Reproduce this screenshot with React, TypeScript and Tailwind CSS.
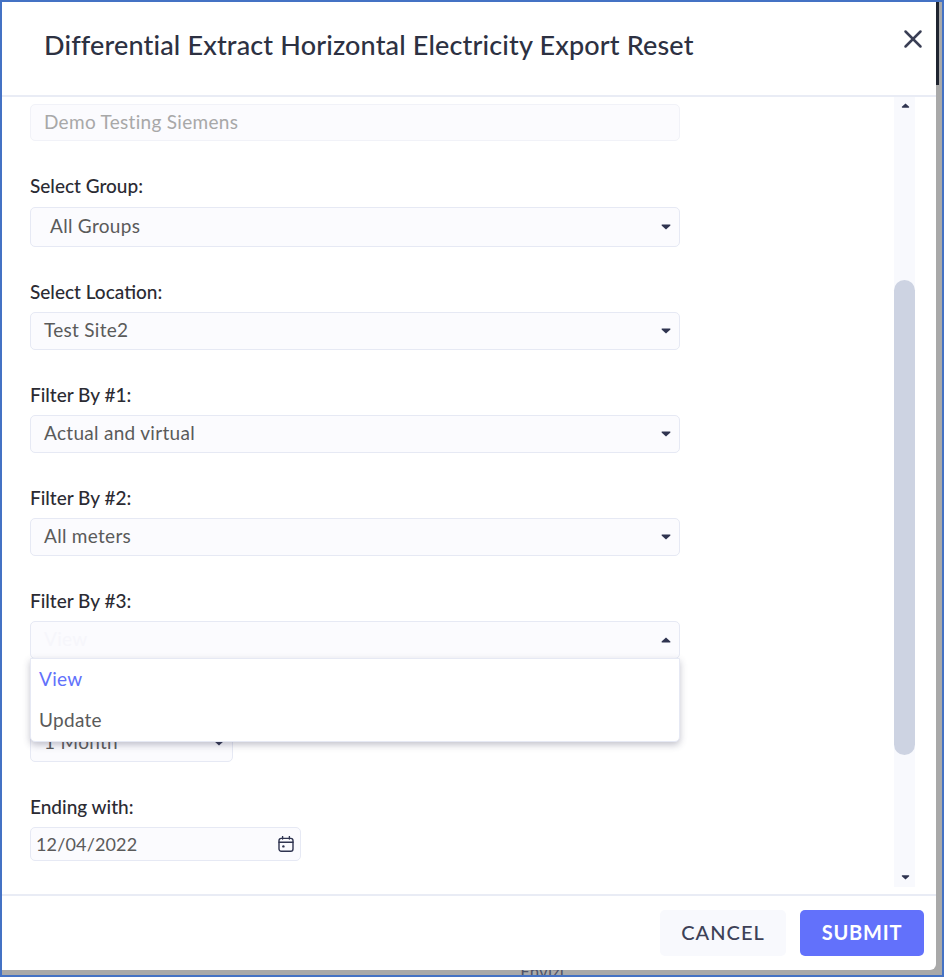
import { X } from "lucide-react"

function Caret({ up = false, className = "" }: { up?: boolean; className?: string }) {
  return (
    <svg width="10" height="6" viewBox="0 0 10 6" className={className}>
      {up ? (
        <path d="M5 0.6 L9.4 4.6 Q9.8 5.6 8.8 5.6 H1.2 Q0.2 5.6 0.6 4.6 Z" fill="#2f3450" />
      ) : (
        <path d="M1.2 0.4 H8.8 Q9.8 0.4 9.4 1.4 L5 5.4 L0.6 1.4 Q0.2 0.4 1.2 0.4 Z" fill="#2f3450" />
      )}
    </svg>
  )
}

function CalendarIcon() {
  return (
    <svg width="16" height="16" viewBox="0 0 16 16" fill="none" stroke="#2f3450" strokeWidth="1.4">
      <rect x="1" y="2.4" width="14" height="12.8" rx="2.2" />
      <path d="M1 6.2 H15 M4.6 0.6 V3 M11.4 0.6 V3" strokeLinecap="round" />
      <circle cx="5.4" cy="10.4" r="1.2" fill="#2f3450" stroke="none" />
    </svg>
  )
}

function FieldLabel({ text, gap = "mb-2" }: { text: string; gap?: string }) {
  return <label className={`block h-6 text-[19px] leading-6 font-medium text-[#2b2b33] ${gap}`}>{text}</label>
}

function Field({
  label,
  value,
  height,
  width = "w-[650px]",
  pad = "pl-[13px]",
  labelGap = "mb-2",
  open = false,
  textColor = "text-[#5a5a5a]",
}: {
  label: string
  value: string
  height: string
  width?: string
  pad?: string
  labelGap?: string
  open?: boolean
  textColor?: string
}) {
  return (
    <div className="mt-[33px]">
      <FieldLabel text={label} gap={labelGap} />
      <div
        className={`flex items-center justify-between rounded-[5px] border border-[#e6e9f4] bg-[#fbfbfe] pr-2 text-[19px] tracking-[0.3px] ${height} ${width} ${pad} ${textColor}`}
      >
        <span className="-mt-[1px]">{value}</span>
        <Caret up={open} />
      </div>
    </div>
  )
}

export default function App() {
  return (
    <div className="flex h-[977px] w-[944px] flex-col overflow-hidden border-2 border-[#4472c4] bg-[#a9a9a9] font-['Lato','Liberation_Sans',sans-serif]">
      <div className="flex min-h-0 flex-1">
        <div className="flex h-[968px] w-[936px] flex-col rounded-br-[6px] bg-white">
          <header className="flex h-[95px] shrink-0 justify-between border-b-2 border-[#e9ecf5] pl-[42px] pr-[8px]">
            <h1 className="pt-[25px] text-[27px] leading-9 font-medium tracking-[0.15px] text-[#2d3142]">
              Differential Extract Horizontal Electricity Export Reset
            </h1>
            <X className="mt-[22px] h-[30px] w-[30px] text-[#3a3f55]" strokeWidth={2} />
          </header>

          <div className="relative flex h-[797px] shrink-0 overflow-hidden">
            <div className="h-[790px] flex-1 overflow-hidden pl-7 pt-[7px]">
              <div className="flex h-[37px] w-[650px] items-center rounded-[5px] border border-[#f1f2f8] bg-[#fbfbfe] pl-[13px] text-[19px] tracking-[0.3px] text-[#a8a8a8]">
                <span className="-mt-[1px]">Demo Testing Siemens</span>
              </div>
              <Field label="Select Group:" value="All Groups" height="h-10" pad="pl-[19px]" labelGap="mb-[9px]" />
              <Field label="Select Location:" value="Test Site2" height="h-[38px]" />
              <Field label="Filter By #1:" value="Actual and virtual" height="h-[38px]" />
              <Field label="Filter By #2:" value="All meters" height="h-[38px]" />
              <Field label="Filter By #3:" value="View" height="h-[38px]" open textColor="text-[#f6f6fb]" />
              <Field label="Period:" value="1 Month" height="h-[38px]" width="w-[203px]" />
              <div className="mt-[33px]">
                <FieldLabel text="Ending with:" />
                <div className="flex h-[34px] w-[271px] items-center justify-between rounded-[5px] border border-[#e6e9f4] bg-[#fbfbfe] pl-[5px] pr-[6px] text-[18px] tracking-[0.15px] text-[#5a5a5a]">
                  <span>12/04/2022</span>
                  <CalendarIcon />
                </div>
              </div>
            </div>

            <div className="absolute left-[28px] top-[561px] h-[84px] w-[650px] rounded-b-[5px] border border-[#e6e9f4] bg-white pl-2 pt-[7px] text-[19px] tracking-[0.3px] shadow-[0_3px_7px_rgba(60,60,90,0.3)]">
              <div className="h-[41px] leading-[26px] text-[#6271fb]">View</div>
              <div className="leading-[26px] text-[#5a5a5a]">Update</div>
            </div>

            <div className="mr-[21px] flex h-[790px] w-[21px] flex-col bg-[#f8f9fd]">
              <div className="flex h-[183px] justify-center pl-[1px] pt-[6px]">
                <Caret up className="h-[5px] w-[9px]" />
              </div>
              <div className="h-[475px] rounded-full bg-[#cdd3e2]" />
              <div className="flex flex-1 items-end justify-center pb-[7px] pl-[1px]">
                <Caret className="h-[5px] w-[9px]" />
              </div>
            </div>
          </div>

          <footer className="flex flex-1 items-start justify-end gap-[14px] border-t-2 border-[#e9ecf5] pr-[12px] pt-[14px]">
            <button className="h-[46px] w-[126px] rounded-[5px] bg-[#f8f9fd] pb-[2px] text-[20px] font-medium tracking-[1px] text-[#3d4157]">
              CANCEL
            </button>
            <button className="h-[46px] w-[124px] rounded-[5px] bg-[#6271fb] pb-[2px] text-[20px] font-bold tracking-[0.8px] text-white">
              SUBMIT
            </button>
          </footer>
        </div>

        <div className="w-[6px]">
          <div className="h-[83px] w-[3px] bg-[#1f2430]" />
        </div>
      </div>
      <div className="flex h-[5px] justify-center overflow-hidden pl-[140px]">
        <span className="-mt-[8px] text-[17px] leading-5 text-[#4f5468]">Envizi</span>
      </div>
    </div>
  )
}
